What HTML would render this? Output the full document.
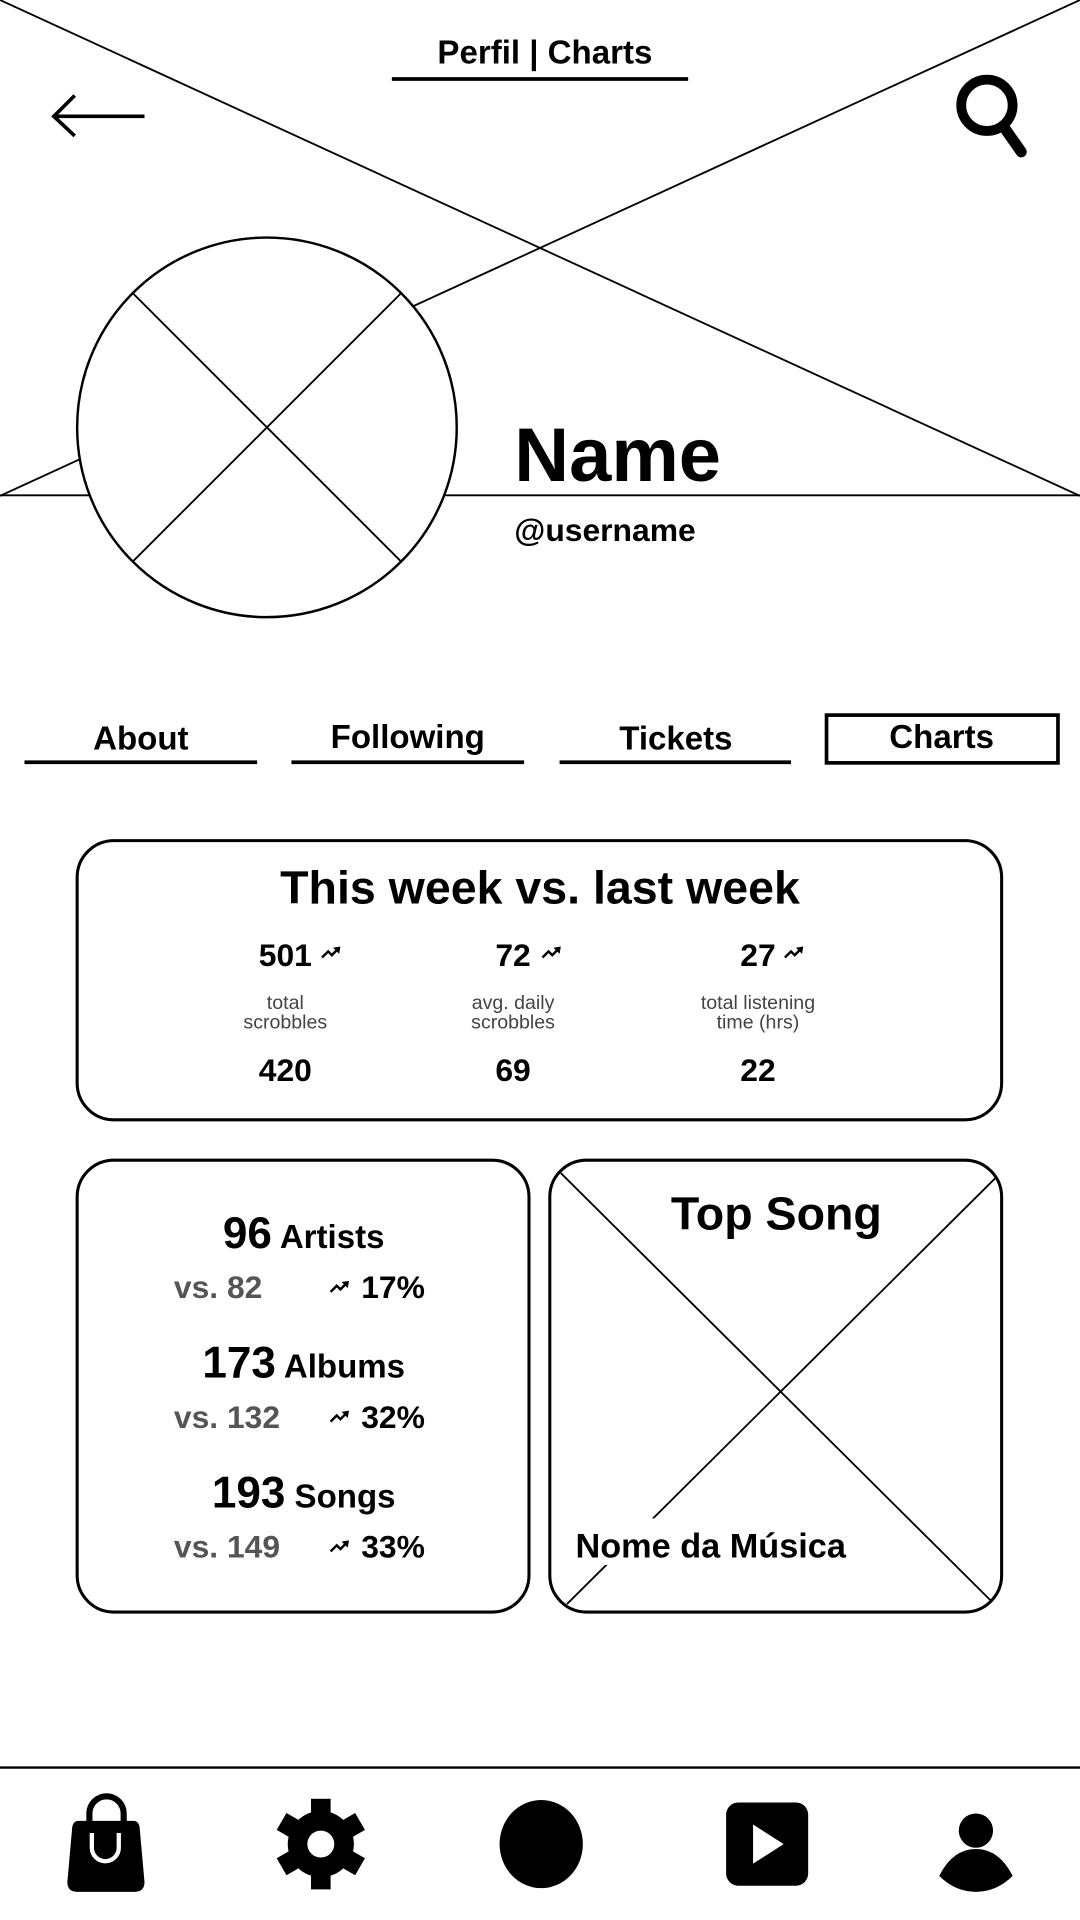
<!DOCTYPE html>
<html><head><meta charset="utf-8"><style>
html,body{margin:0;padding:0;background:#fff;}
svg{display:block}
text{font-family:"Liberation Sans",Arial,sans-serif;font-weight:bold;fill:#000}
</style></head><body>
<svg width="1080" height="1920" viewBox="0 0 882 1568" xmlns="http://www.w3.org/2000/svg">
<defs>
<g id="tr"><path d="M0 9 L5 4 L8 7 L13 2" fill="none" stroke="#000" stroke-width="2"/><path d="M9 1 L15 0 L14 6 Z" fill="#000"/></g>
</defs>
<rect width="882" height="1568" fill="#fff"/>
<line x1="0" y1="0" x2="882" y2="405" stroke="#000" stroke-width="1.5"/>
<line x1="882" y1="0" x2="0" y2="405" stroke="#000" stroke-width="1.5"/>
<line x1="0" y1="404.5" x2="882" y2="404.5" stroke="#000" stroke-width="1.5"/>
<rect x="315" y="20" width="252" height="52" fill="#fff"/>
<text x="445" y="52" font-size="27" text-anchor="middle">Perfil | Charts</text>
<line x1="320" y1="64.5" x2="562" y2="64.5" stroke="#000" stroke-width="3"/>
<line x1="43" y1="95" x2="118" y2="95" stroke="#000" stroke-width="3"/>
<polyline points="61,78 44,95 61,111" fill="none" stroke="#000" stroke-width="3"/>
<circle cx="806" cy="86" r="21" fill="none" stroke="#000" stroke-width="8"/>
<line x1="820" y1="104" x2="834" y2="124" stroke="#000" stroke-width="9" stroke-linecap="round"/>
<circle cx="218" cy="349" r="155" fill="#fff" stroke="#000" stroke-width="2"/>
<line x1="108" y1="239" x2="328" y2="459" stroke="#000" stroke-width="1.5"/>
<line x1="328" y1="239" x2="108" y2="459" stroke="#000" stroke-width="1.5"/>
<text x="420" y="393" font-size="62">Name</text>
<text x="420" y="442" font-size="26">@username</text>
<text x="115" y="612" font-size="27" text-anchor="middle">About</text>
<line x1="20" y1="622.5" x2="210" y2="622.5" stroke="#000" stroke-width="3"/>
<text x="333" y="611" font-size="27" text-anchor="middle">Following</text>
<line x1="238" y1="622.5" x2="428" y2="622.5" stroke="#000" stroke-width="3"/>
<text x="552" y="612" font-size="27" text-anchor="middle">Tickets</text>
<line x1="457" y1="622.5" x2="646" y2="622.5" stroke="#000" stroke-width="3"/>
<rect x="675" y="584" width="189" height="39" fill="none" stroke="#000" stroke-width="3"/>
<text x="769" y="611" font-size="27" text-anchor="middle">Charts</text>
<rect x="63" y="686.5" width="755" height="228" rx="30" fill="none" stroke="#000" stroke-width="2.5"/>
<text x="441" y="738" font-size="38" text-anchor="middle">This week vs. last week</text>
<text x="233" y="789" font-size="26" text-anchor="middle">501</text><use href="#tr" x="263" y="773"/>
<text x="419" y="789" font-size="26" text-anchor="middle">72</text><use href="#tr" x="443" y="773"/>
<text x="619" y="789" font-size="26" text-anchor="middle">27</text><use href="#tr" x="641" y="773"/>
<g text-anchor="middle">
<text x="233" y="824" font-size="16" style="fill:#444;font-weight:normal">total</text>
<text x="233" y="840" font-size="16" style="fill:#444;font-weight:normal">scrobbles</text>
<text x="419" y="824" font-size="16" style="fill:#444;font-weight:normal">avg. daily</text>
<text x="419" y="840" font-size="16" style="fill:#444;font-weight:normal">scrobbles</text>
<text x="619" y="824" font-size="16" style="fill:#444;font-weight:normal">total listening</text>
<text x="619" y="840" font-size="16" style="fill:#444;font-weight:normal">time (hrs)</text>
</g>
<text x="233" y="883" font-size="26" text-anchor="middle">420</text>
<text x="419" y="883" font-size="26" text-anchor="middle">69</text>
<text x="619" y="883" font-size="26" text-anchor="middle">22</text>
<rect x="63" y="947.5" width="369" height="369" rx="30" fill="none" stroke="#000" stroke-width="2.5"/>
<text x="248" y="1019" text-anchor="middle"><tspan font-size="36">96</tspan><tspan font-size="27"> Artists</tspan></text>
<text x="142" y="1060" font-size="26" style="fill:#555">vs. 82</text><use href="#tr" x="270" y="1046"/><text x="295" y="1060" font-size="26">17%</text>
<text x="248" y="1125" text-anchor="middle"><tspan font-size="36">173</tspan><tspan font-size="27"> Albums</tspan></text>
<text x="142" y="1166" font-size="26" style="fill:#555">vs. 132</text><use href="#tr" x="270" y="1152"/><text x="295" y="1166" font-size="26">32%</text>
<text x="248" y="1231" text-anchor="middle"><tspan font-size="36">193</tspan><tspan font-size="27"> Songs</tspan></text>
<text x="142" y="1272" font-size="26" style="fill:#555">vs. 149</text><use href="#tr" x="270" y="1258"/><text x="295" y="1272" font-size="26">33%</text>
<rect x="449" y="947.5" width="369" height="369" rx="30" fill="none" stroke="#000" stroke-width="2.5"/>
<line x1="458" y1="958" x2="810" y2="1308" stroke="#000" stroke-width="1.5"/>
<line x1="813" y1="962" x2="463" y2="1310" stroke="#000" stroke-width="1.5"/>
<text x="634" y="1004" font-size="38" text-anchor="middle">Top Song</text>
<rect x="468" y="1240" width="228" height="38" fill="#fff"/>
<text x="470" y="1272" font-size="28">Nome da Música</text>
<line x1="0" y1="1443.5" x2="882" y2="1443.5" stroke="#000" stroke-width="2"/>
<path d="M73 1490 V1481 A14 14 0 0 1 101 1481 V1490" fill="none" stroke="#000" stroke-width="5"/>
<path d="M64 1487 H109 Q113 1487 114 1492 L118 1537 Q118 1545 110 1545 H63 Q55 1545 55 1537 L59 1492 Q60 1487 64 1487 Z" fill="#000"/>
<path d="M75 1497 V1509 A11 11 0 0 0 97 1509 V1497" fill="none" stroke="#fff" stroke-width="3.5"/>
<g transform="translate(262,1506)">
<circle r="27" fill="#000"/>
<g fill="#000">
<rect x="-8" y="-37" width="16" height="74"/>
<rect x="-8" y="-37" width="16" height="74" transform="rotate(60)"/>
<rect x="-8" y="-37" width="16" height="74" transform="rotate(120)"/>
</g>
<circle r="11" fill="#fff"/>
</g>
<ellipse cx="442" cy="1506" rx="34" ry="36" fill="#000"/>
<rect x="593" y="1472" width="67" height="68" rx="10" fill="#000"/>
<path d="M615 1490 L640 1506 L615 1522 Z" fill="#fff"/>
<circle cx="797" cy="1495" r="14" fill="#000"/>
<path d="M767 1532 Q778 1510 797 1510 Q816 1510 827 1532 Q814 1545 797 1545 Q780 1545 767 1532 Z" fill="#000"/>
</svg>
</body></html>
